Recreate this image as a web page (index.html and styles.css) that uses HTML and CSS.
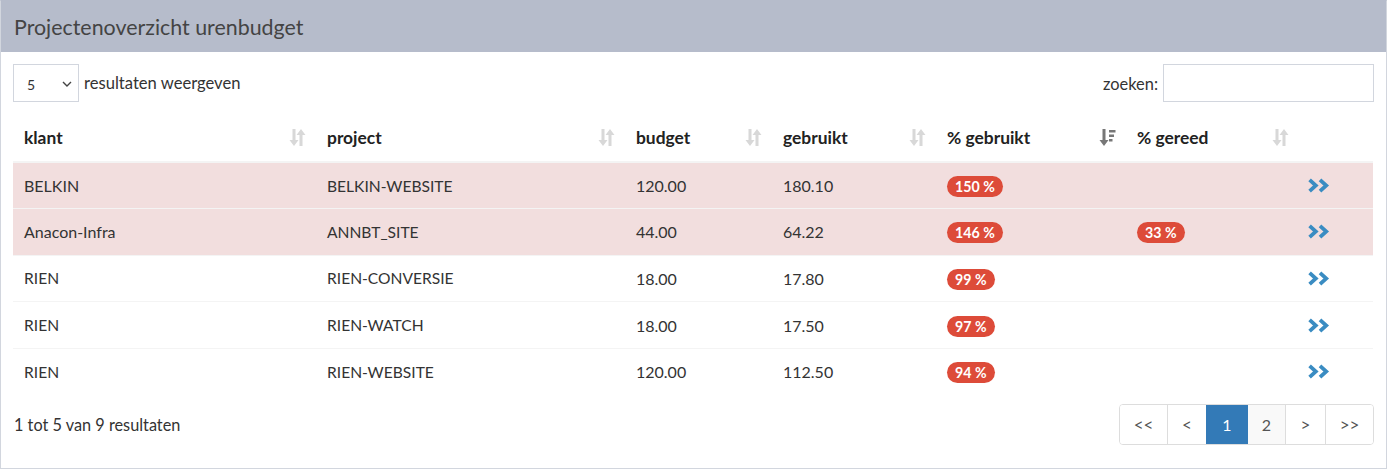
FILE: index.html
```html
<!DOCTYPE html>
<html lang="nl">
<head>
<meta charset="utf-8">
<title>Projectenoverzicht urenbudget</title>
<link rel="stylesheet" href="styles.css">
</head>
<body>
<div class="box">
  <div class="box-header"><h3 class="box-title">Projectenoverzicht urenbudget</h3></div>
  <div class="box-body">
    <div class="toolbar">
      <label class="length">
        <span class="select">5<svg class="caret" viewBox="0 0 10 6" width="10" height="6"><path d="M1 1l4 4 4-4" fill="none" stroke="#444" stroke-width="1.4"/></svg></span>
        resultaten weergeven
      </label>
      <label class="search">zoeken: <span class="input"></span></label>
    </div>
    <table class="tbl">
      <colgroup>
        <col class="c1"><col class="c2"><col class="c3"><col class="c4"><col class="c5"><col class="c6"><col class="c7">
      </colgroup>
      <thead>
        <tr>
          <th><div class="th">klant<svg class="sort" viewBox="0 0 17 19" width="17" height="19"><path d="M3.5 1h3v11h3l-4.5 6-4.5-6h3z" fill="#d8d8d8"/><path d="M10.5 18h3V7h3L12 1 7.5 7h3z" fill="#d8d8d8"/></svg></div></th>
          <th><div class="th">project<svg class="sort" viewBox="0 0 17 19" width="17" height="19"><path d="M3.5 1h3v11h3l-4.5 6-4.5-6h3z" fill="#d8d8d8"/><path d="M10.5 18h3V7h3L12 1 7.5 7h3z" fill="#d8d8d8"/></svg></div></th>
          <th><div class="th">budget<svg class="sort" viewBox="0 0 17 19" width="17" height="19"><path d="M3.5 1h3v11h3l-4.5 6-4.5-6h3z" fill="#d8d8d8"/><path d="M10.5 18h3V7h3L12 1 7.5 7h3z" fill="#d8d8d8"/></svg></div></th>
          <th><div class="th">gebruikt<svg class="sort" viewBox="0 0 17 19" width="17" height="19"><path d="M3.5 1h3v11h3l-4.5 6-4.5-6h3z" fill="#d8d8d8"/><path d="M10.5 18h3V7h3L12 1 7.5 7h3z" fill="#d8d8d8"/></svg></div></th>
          <th><div class="th">% gebruikt<svg class="sort" viewBox="0 0 17 19" width="17" height="19"><path d="M3.5 1h3v11h3l-4.5 6-4.5-6h3z" fill="#777"/><path d="M10 2h6.5v2.5H10zM10 6.5h5v2.5h-5zM10 11h3.5v2.5H10z" fill="#777"/></svg></div></th>
          <th><div class="th">% gereed<svg class="sort" viewBox="0 0 17 19" width="17" height="19"><path d="M3.5 1h3v11h3l-4.5 6-4.5-6h3z" fill="#d8d8d8"/><path d="M10.5 18h3V7h3L12 1 7.5 7h3z" fill="#d8d8d8"/></svg></div></th>
          <th></th>
        </tr>
      </thead>
      <tbody>
        <tr class="danger">
          <td>BELKIN</td><td class="up">BELKIN-WEBSITE</td><td>120.00</td><td>180.10</td>
          <td><span class="badge">150 %</span></td><td></td>
          <td class="go"><svg viewBox="0 0 24 16" width="25" height="17"><path d="M2.5 2.5l6 5.5-6 5.5M12.5 2.5l6 5.5-6 5.5" fill="none" stroke="#3a8cc2" stroke-width="3.6"/></svg></td>
        </tr>
        <tr class="danger">
          <td>Anacon-Infra</td><td class="up">ANNBT_SITE</td><td>44.00</td><td>64.22</td>
          <td><span class="badge">146 %</span></td><td><span class="badge">33 %</span></td>
          <td class="go"><svg viewBox="0 0 24 16" width="25" height="17"><path d="M2.5 2.5l6 5.5-6 5.5M12.5 2.5l6 5.5-6 5.5" fill="none" stroke="#3a8cc2" stroke-width="3.6"/></svg></td>
        </tr>
        <tr>
          <td class="up">RIEN</td><td class="up">RIEN-CONVERSIE</td><td>18.00</td><td>17.80</td>
          <td><span class="badge">99 %</span></td><td></td>
          <td class="go"><svg viewBox="0 0 24 16" width="25" height="17"><path d="M2.5 2.5l6 5.5-6 5.5M12.5 2.5l6 5.5-6 5.5" fill="none" stroke="#3a8cc2" stroke-width="3.6"/></svg></td>
        </tr>
        <tr>
          <td class="up">RIEN</td><td class="up">RIEN-WATCH</td><td>18.00</td><td>17.50</td>
          <td><span class="badge">97 %</span></td><td></td>
          <td class="go"><svg viewBox="0 0 24 16" width="25" height="17"><path d="M2.5 2.5l6 5.5-6 5.5M12.5 2.5l6 5.5-6 5.5" fill="none" stroke="#3a8cc2" stroke-width="3.6"/></svg></td>
        </tr>
        <tr>
          <td class="up">RIEN</td><td class="up">RIEN-WEBSITE</td><td>120.00</td><td>112.50</td>
          <td><span class="badge">94 %</span></td><td></td>
          <td class="go"><svg viewBox="0 0 24 16" width="25" height="17"><path d="M2.5 2.5l6 5.5-6 5.5M12.5 2.5l6 5.5-6 5.5" fill="none" stroke="#3a8cc2" stroke-width="3.6"/></svg></td>
        </tr>
      </tbody>
    </table>
    <div class="footer">
      <div class="info">1 tot 5 van 9 resultaten</div>
      <ul class="pager">
        <li>&lt;&lt;</li>
        <li>&lt;</li>
        <li class="active">1</li>
        <li class="alt">2</li>
        <li>&gt;</li>
        <li>&gt;&gt;</li>
      </ul>
    </div>
  </div>
</div>
</body>
</html>
```
FILE: styles.css
```css
* { box-sizing: border-box; }
html, body { margin: 0; padding: 0; background: #fff; }
body {
  font-family: Lato, "Noto Sans", sans-serif;
  font-size: 16px;
  color: #333;
}
.box {
  width: 1387px;
  height: 469px;
  border: 1px solid #d2d6de;
  border-top-color: #b6bccb;
  background: #fff;
}
.box-header {
  background: #b6bccb;
  height: 51px;
  display: flex;
  align-items: center;
  padding: 0 13px;
}
.box-title {
  margin: 0;
  font-weight: 400;
  font-size: 21.4px;
  color: #444;
}
.box-body { padding: 12px 12px 0 12px; }
.toolbar {
  display: flex;
  justify-content: space-between;
  align-items: center;
  height: 38px;
}
.length, .search { display: flex; align-items: center; gap: 5px; }
.length { font-size: 16.6px; }
.search { font-size: 16.4px; }
.select {
  width: 66px;
  height: 38px;
  border: 1px solid #d2d6de;
  display: flex;
  align-items: center;
  justify-content: space-between;
  padding: 2px 5px 0 13px;
  font-size: 14px;
  color: #333;
}
.caret { margin-right: 1px; }
.input {
  display: block;
  width: 211px;
  height: 38px;
  border: 1px solid #d2d6de;
}
.tbl {
  margin-top: 12px;
  width: 1360px;
  border-collapse: collapse;
  table-layout: fixed;
}
.c1 { width: 303px; } .c2 { width: 309px; } .c3 { width: 147px; } .c4 { width: 164px; }
.c5 { width: 190px; } .c6 { width: 173px; } .c7 { width: 74px; }
.tbl th {
  text-align: left;
  font-weight: 700;
  font-size: 17.4px;
  color: #222;
  padding: 0 10px 0 11px;
  height: 48px;
  border-bottom: 2px solid #f4f4f4;
}
.th { display: flex; align-items: center; justify-content: space-between; }
.sort { display: block; }
.tbl td {
  padding: 0 11px;
  height: 46.6px;
  border-top: 1px solid #f4f4f4;
  color: #333;
}
.tbl td.up { font-size: 15.6px; }
.tbl tbody tr:first-child td { border-top: none; }
.tbl tr.danger td { background: #f2dede; }
.badge {
  display: inline-block;
  background: #dd4b39;
  color: #fff;
  font-weight: 700;
  font-size: 14.2px;
  line-height: 21px;
  padding: 0 8px;
  border-radius: 10.5px;
  margin-top: 2px;
}
.go { padding-left: 8px !important; }
.go svg { display: block; }
.footer {
  display: flex;
  justify-content: space-between;
  align-items: center;
  margin-top: 9px;
}
.info { padding-left: 1px; font-size: 16.3px; }
.pager {
  list-style: none;
  margin: 0;
  padding: 0;
  display: flex;
  border: 1px solid #ddd;
  border-radius: 4px;
  overflow: hidden;
  height: 41px;
}
.pager li {
  display: flex;
  align-items: center;
  justify-content: center;
  padding: 0 4px;
  color: #555;
  font-size: 17px;
  border-left: 1px solid #ddd;
  background: #fff;
}
.pager li:first-child { border-left: none; width: 47px; }
.pager li:nth-child(2) { width: 39px; }
.pager li:nth-child(3) { width: 41px; }
.pager li:nth-child(4) { width: 38px; }
.pager li:nth-child(5) { width: 40px; }
.pager li:nth-child(6) { width: 48px; }
.pager li.active { background: #337ab7; color: #fff; border-left-color: #337ab7; font-size: 16px; }
.pager li.alt { background: #f9f9f9; font-size: 16px; border-left-color: #337ab7; }
```
